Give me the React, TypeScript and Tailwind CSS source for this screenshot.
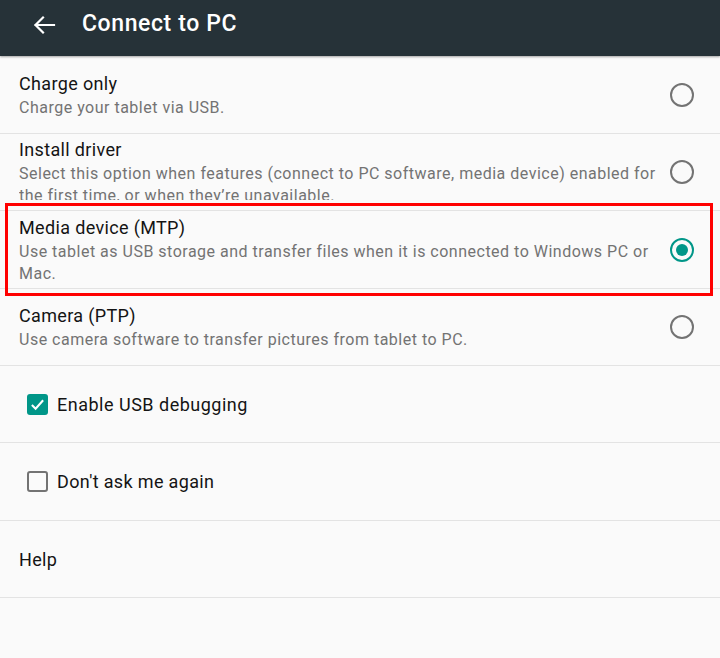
import React from "react";

const font = { fontFamily: "Roboto, 'Noto Sans', sans-serif" };

function Radio({ checked }: { checked?: boolean }) {
  return (
    <svg width="24" height="24" viewBox="0 0 24 24" className="shrink-0">
      <circle cx="12" cy="12" r="11" fill="none" stroke={checked ? "#009688" : "#737373"} strokeWidth="2" />
      {checked && <circle cx="12" cy="12" r="6" fill="#009688" />}
    </svg>
  );
}

function OptionRow({
  title,
  sub,
  h,
  checked,
  clip,
}: {
  title: string;
  sub: string;
  h: string;
  checked?: boolean;
  clip?: boolean;
}) {
  return (
    <div className={`flex items-center pl-[19px] pr-[26px] border-b border-[#e3e3e3] ${h}`}>
      <div className={`flex-1 pr-[8px] ${clip ? "self-start mt-[3px] h-[63px] overflow-hidden" : ""}`}>
        <div className="text-[18px] leading-[26px] text-[#141414] tracking-[0.35px]">{title}</div>
        <div className="text-[16px] leading-[22px] text-[#737373] tracking-[0.5px]">{sub}</div>
      </div>
      <Radio checked={checked} />
    </div>
  );
}

export default function App() {
  return (
    <div className="w-[720px] h-[658px] bg-[#fafafa] overflow-hidden relative" style={font}>
      <div className="h-[56px] bg-[#263238] flex items-center pb-[7px] shadow-[0_1px_2px_rgba(0,0,0,0.35)] relative z-10">
        <svg width="24" height="24" viewBox="0 0 24 24" className="ml-[32px]">
          <path d="M22 12H3.5M11 4.5L3.5 12L11 19.5" fill="none" stroke="#fff" strokeWidth="2.2" strokeLinecap="square" />
        </svg>
        <div className="ml-[26px] text-white text-[23px] font-medium tracking-[0.6px]">Connect to PC</div>
      </div>

      <OptionRow title="Charge only" sub="Charge your tablet via USB." h="h-[78px]" />
      <OptionRow
        title="Install driver"
        sub="Select this option when features (connect to PC software, media device) enabled for the first time, or when they’re unavailable."
        h="h-[77px]"
        clip
      />
      <OptionRow
        title="Media device (MTP)"
        sub="Use tablet as USB storage and transfer files when it is connected to Windows PC or Mac."
        h="h-[78px]"
        checked
      />
      <OptionRow
        title="Camera (PTP)"
        sub="Use camera software to transfer pictures from tablet to PC."
        h="h-[77px]"
      />

      <div className="h-[77px] flex items-center pl-[27px] border-b border-[#e3e3e3]">
        <div className="w-[21px] h-[21px] rounded-[3px] bg-[#009688] flex items-center justify-center">
          <svg width="15" height="15" viewBox="0 0 16 16">
            <path d="M2 8.5L6 12.5L14 3.5" fill="none" stroke="#fff" strokeWidth="2.2" />
          </svg>
        </div>
        <div className="ml-[9px] text-[18px] text-[#141414] tracking-[0.5px]">Enable USB debugging</div>
      </div>

      <div className="h-[78px] flex items-center pl-[27px] border-b border-[#e3e3e3]">
        <div className="w-[21px] h-[21px] rounded-[3px] border-2 border-[#737373]" />
        <div className="ml-[9px] text-[18px] text-[#141414] tracking-[0.35px]">Don't ask me again</div>
      </div>

      <div className="h-[77px] flex items-center pl-[19px] border-b border-[#e3e3e3]">
        <div className="text-[18px] text-[#141414] tracking-[0.35px]">Help</div>
      </div>

      <div className="absolute left-[5px] top-[203px] w-[708px] h-[93px] border-[3px] border-[#ff0000] pointer-events-none" />
    </div>
  );
}
